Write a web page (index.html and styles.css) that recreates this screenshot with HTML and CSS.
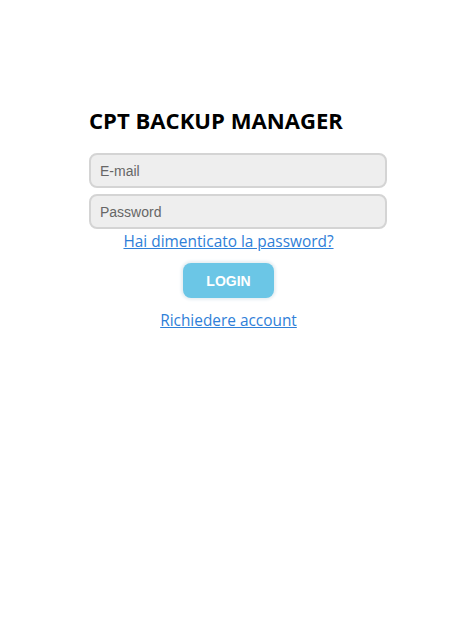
FILE: index.html
```html
<!DOCTYPE html>
<html>
<head>
<meta charset="utf-8">
<link rel="stylesheet" href="styles.css">
</head>
<body>
<div class="login">
  <h1 class="title">CPT BACKUP MANAGER</h1>
  <form class="form">
    <input class="field" type="text" placeholder="E-mail">
    <input class="field field-last" type="password" placeholder="Password">
    <a class="link" href="#">Hai dimenticato la password?</a>
    <button class="btn" type="button">LOGIN</button>
    <a class="link" href="#">Richiedere account</a>
  </form>
</div>
</body>
</html>
```
FILE: styles.css
```css
html, body {
  margin: 0;
  padding: 0;
  background: #ffffff;
}
.login {
  padding-top: 105px;
}
.title {
  width: 298px;
  margin: 0 0 18px 89px;
  font-family: "Open Sans", sans-serif;
  font-weight: 700;
  font-size: 22.1px;
  line-height: 30px;
  color: #000;
}
.form {
  display: flex;
  flex-direction: column;
  align-items: center;
}
.field {
  box-sizing: border-box;
  align-self: flex-start;
  width: 298px;
  height: 35px;
  margin: 0 0 6px 89px;
  padding: 0 9px;
  border: 2px solid #d4d4d4;
  border-radius: 8px;
  background: #eeeeee;
  font-family: "Liberation Sans", Arial, sans-serif;
  font-size: 14px;
  color: #555;
  outline: none;
}
.field-last {
  margin-bottom: 3px;
}
.field::placeholder {
  color: #666;
}
.link {
  font-family: "Open Sans", sans-serif;
  font-size: 15.4px;
  line-height: 20px;
  color: #2f80d8;
  text-decoration: underline;
}
.btn {
  margin: 11px 0 13px 0;
  width: 91px;
  height: 35px;
  border: none;
  border-radius: 8px;
  background: #6bc6e6;
  box-shadow: 0 0 3px 2px #e6eef2;
  color: #fff;
  font-family: "Liberation Sans", Arial, sans-serif;
  font-weight: 700;
  font-size: 14px;
}
```
